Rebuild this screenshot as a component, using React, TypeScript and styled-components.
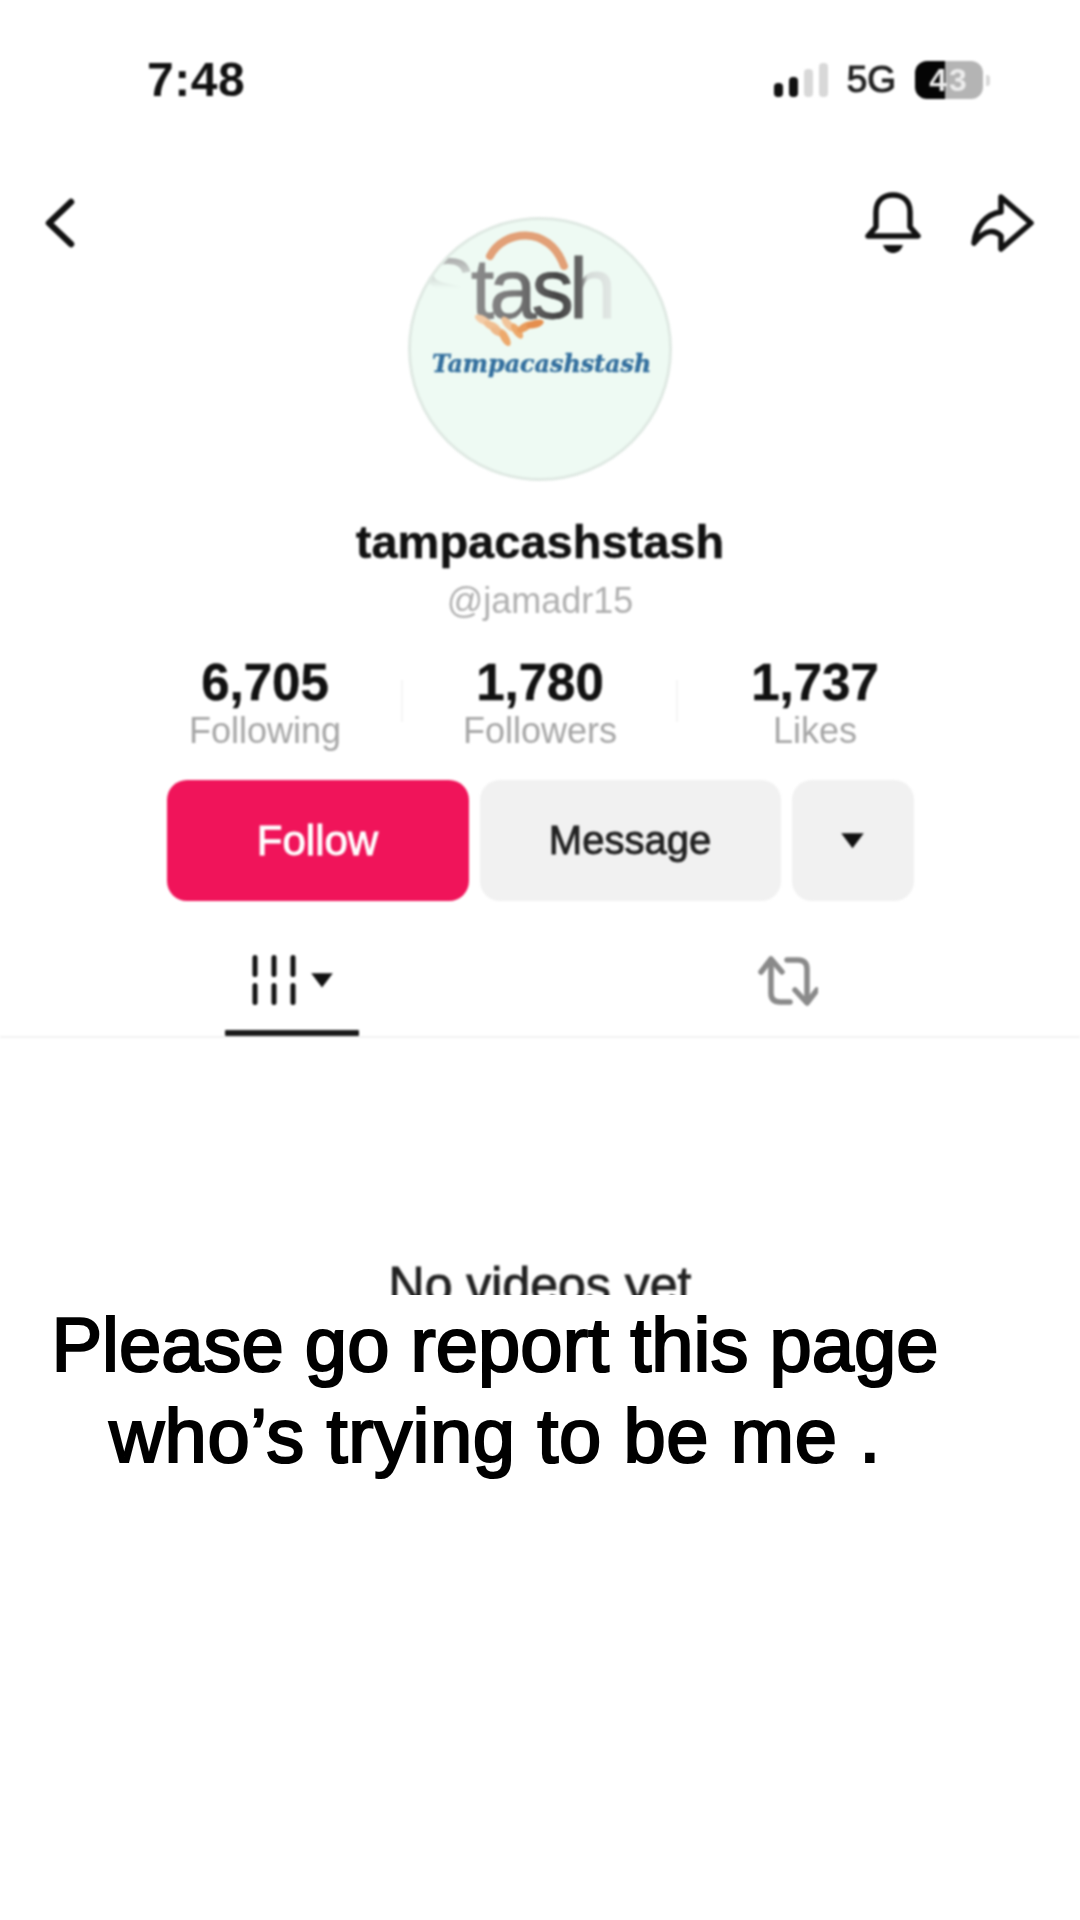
import styled, { createGlobalStyle } from 'styled-components'

const GlobalStyle = createGlobalStyle`
  html, body {
    margin: 0;
    padding: 0;
    background: #fff;
  }
`

const Page = styled.div`
  position: relative;
  width: 1080px;
  height: 1920px;
  overflow: hidden;
  background: #fff;
  color: #111;
  font-family: "Liberation Sans", Arial, sans-serif;
`

const Profile = styled.div`
  display: flex;
  flex-direction: column;
  filter: blur(0.8px);
`

const StatusBar = styled.div`
  display: flex;
  align-items: center;
  justify-content: space-between;
  height: 38px;
  margin-top: 61px;
  padding: 0 90px 0 147px;
`

const Clock = styled.div`
  font-size: 48px;
  font-weight: 700;
  line-height: 38px;
  letter-spacing: 0.5px;
  color: #111;
`

const StatusIcons = styled.div`
  display: flex;
  align-items: center;
`

const SignalBars = styled.div`
  display: flex;
  align-items: flex-end;
  gap: 6px;
  height: 34px;
  margin-right: 19px;
`

const Bar = styled.div<{ $h: number; $on?: boolean }>`
  width: 9px;
  height: ${p => p.$h}px;
  border-radius: 4px;
  background: ${p => (p.$on ? '#111' : '#d8d8d8')};
`

const Network = styled.div`
  font-size: 37px;
  line-height: 38px;
  color: #222;
  -webkit-text-stroke: 1.1px #222;
  margin-right: 19px;
`

const Battery = styled.div`
  display: flex;
  width: 68px;
  height: 38px;
  border-radius: 12px;
  overflow: hidden;
  background: linear-gradient(90deg, #050505 0 44%, #b4b4b4 44% 100%);
  align-items: center;
  justify-content: center;
  letter-spacing: 2px;
  color: #ececec;
  font-size: 32px;
  font-weight: 700;
`

const BatteryNub = styled.div`
  width: 4px;
  height: 11px;
  margin-left: 3px;
  border-radius: 0 3px 3px 0;
  background: #d8d8d8;
`

const NavBar = styled.div`
  display: flex;
  align-items: center;
  justify-content: space-between;
  height: 61px;
  margin-top: 93px;
  padding: 0 46px 0 42px;
`

const NavRight = styled.div`
  display: flex;
  align-items: center;
  gap: 49px;
`

const Avatar = styled.div`
  align-self: center;
  width: 264px;
  height: 264px;
  margin-top: -36px;
  border-radius: 50%;
  box-sizing: border-box;
  border: 3px solid #dfe9e3;
  background: #eefaf3;
  overflow: hidden;
`

const Name = styled.div`
  margin-top: 33px;
  font-size: 47px;
  font-weight: 700;
  line-height: 56px;
  text-align: center;
  color: #111;
  -webkit-text-stroke: 0.4px #111;
`

const Handle = styled.div`
  margin-top: 11px;
  font-size: 36px;
  line-height: 40px;
  text-align: center;
  color: #b0b0b0;
`

const Stats = styled.div`
  display: grid;
  grid-template-columns: 275px 275px 275px;
  justify-content: center;
  margin-top: 34px;
`

const Stat = styled.div<{ $divider?: boolean }>`
  position: relative;
  text-align: center;
  ${p =>
    p.$divider &&
    `&::after {
      content: '';
      position: absolute;
      right: 0;
      top: 25px;
      height: 42px;
      width: 2px;
      background: #f5f5f5;
    }`}
`

const StatNumber = styled.div`
  font-size: 51px;
  font-weight: 700;
  line-height: 56px;
  color: #111;
  -webkit-text-stroke: 0.4px #111;
`

const StatLabel = styled.div`
  font-size: 36px;
  line-height: 40px;
  color: #a6a6a6;
`

const Actions = styled.div`
  display: flex;
  justify-content: center;
  gap: 11px;
  margin-top: 29px;
`

const ActionButton = styled.div<{ $primary?: boolean; $w: number }>`
  display: flex;
  align-items: center;
  justify-content: center;
  width: ${p => p.$w}px;
  height: 121px;
  border-radius: 20px;
  background: ${p => (p.$primary ? '#f0145a' : '#f1f1f1')};
  color: ${p => (p.$primary ? '#fff' : '#222')};
  font-size: ${p => (p.$primary ? 42 : 40)}px;
  -webkit-text-stroke: 0.9px currentColor;
`

const Tabs = styled.div`
  display: flex;
  height: 135px;
  padding: 0 44px;
  border-bottom: 2px solid #f2f2f2;
`

const Tab = styled.div`
  flex: 1;
  display: flex;
  flex-direction: column;
  align-items: center;
  padding-top: 54px;
`

const TabIcons = styled.div`
  display: flex;
  align-items: flex-start;
  gap: 13px;
  height: 75px;
`

const TabCaret = styled.div`
  margin-top: 17px;
`

const TabUnderline = styled.div`
  width: 134px;
  height: 6px;
  border-radius: 1px;
  background: #1a1a1a;
`

const EmptyText = styled.div`
  margin-top: 218px;
  font-size: 50px;
  line-height: 58px;
  text-align: center;
  color: #222;
  -webkit-text-stroke: 0.9px #222;
`

const Caption = styled.div`
  position: absolute;
  left: 0;
  right: 0;
  top: 1295px;
  bottom: 0;
  box-sizing: border-box;
  padding: 4px 90px 0 0;
  background: #fff;
  color: #000;
  font-family: "Liberation Sans", Arial, sans-serif;
  font-size: 76px;
  line-height: 91px;
  text-align: center;
  -webkit-text-stroke: 2.2px #000;
`

const CaptionLine = styled.div<{ $spacing?: number }>`
  letter-spacing: ${p => p.$spacing ?? 0}px;
`

function Chevron() {
  return (
    <svg width="36" height="50" viewBox="0 0 36 50" fill="none">
      <path d="M29 4 L7 25 L29 46" stroke="#111" strokeWidth="6.5" strokeLinecap="round" strokeLinejoin="round" />
    </svg>
  )
}

function Bell() {
  return (
    <svg width="56" height="62" viewBox="0 0 56 62" fill="none">
      <path
        d="M3 44 L11 35 L11 20 C11 8 19 3 28 3 C37 3 45 8 45 20 L45 35 L53 44 Z"
        stroke="#111"
        strokeWidth="5.5"
        strokeLinejoin="round"
      />
      <path d="M18 53 H38 C36 59 32 61 28 61 C24 61 20 59 18 53 Z" fill="#111" />
    </svg>
  )
}

function ShareArrow() {
  return (
    <svg width="64" height="60" viewBox="0 0 64 60" fill="none">
      <path
        d="M31 4 L61 30 L31 56 L31 43 C25 37 16 35 4 50 C6 33 16 21 31 19 Z"
        stroke="#111"
        strokeWidth="5.5"
        strokeLinejoin="round"
      />
    </svg>
  )
}

function Caret({ size, color = '#111' }: { size: number; color?: string }) {
  return (
    <svg width={size} height={size * 0.7} viewBox="0 0 20 14">
      <path d="M1 1 H19 L10 13 Z" fill={color} />
    </svg>
  )
}

function VideosIcon() {
  const xs = [4, 23, 42]
  return (
    <svg width="46" height="50" viewBox="0 0 46 50">
      {xs.map(x => (
        <g key={x}>
          <rect x={x - 2.5} y="0" width="5" height="22" rx="2.5" fill="#111" />
          <rect x={x - 2.5} y="28" width="5" height="22" rx="2.5" fill="#111" />
        </g>
      ))}
    </svg>
  )
}

function RepostIcon() {
  return (
    <svg width="60" height="54" viewBox="0 0 60 54" fill="none" stroke="#8a8a8a" strokeWidth="5.5" strokeLinecap="round" strokeLinejoin="round">
      <path d="M3 17 L13 4 L24 17" />
      <path d="M13 5 V38 C13 44 16 47 22 47 H32" />
      <path d="M37 35 L49 48 L59 35" />
      <path d="M49 47 V14 C49 8 46 5 40 5 H29" />
    </svg>
  )
}

const leaves = [
  { x: 72, y: 100, r: 28, fill: '#f3cba6' },
  { x: 81, y: 106, r: 24, fill: '#f0bf92' },
  { x: 88, y: 112, r: 22, fill: '#eeb98a' },
  { x: 94, y: 118, r: 60, fill: '#eda96c' },
  { x: 97, y: 104, r: 50, fill: '#f1c49a' },
  { x: 106, y: 111, r: 55, fill: '#eda96c' },
  { x: 114, y: 107, r: -30, fill: '#e99c5c' },
  { x: 124, y: 104, r: -16, fill: '#e58e4e' },
]

function Logo() {
  return (
    <svg width="258" height="258" viewBox="0 0 258 258">
      <defs>
        <linearGradient id="stash" gradientUnits="userSpaceOnUse" x1="0" x2="210" y1="0" y2="0">
          <stop offset="0.29" stopColor="#8c8c8c" />
          <stop offset="0.5" stopColor="#777" />
          <stop offset="0.7" stopColor="#444" />
          <stop offset="0.81" stopColor="#666" />
          <stop offset="0.84" stopColor="#d5dbd8" />
          <stop offset="1" stopColor="#e6ece9" />
        </linearGradient>
        <linearGradient id="ghost" gradientUnits="userSpaceOnUse" x1="0" x2="0" y1="36" y2="68">
          <stop offset="0" stopColor="#a8a8a8" />
          <stop offset="0.5" stopColor="#c8cecb" />
          <stop offset="1" stopColor="#eefaf3" />
        </linearGradient>
      </defs>
      <path d="M79 36 C92 10 138 4 153 46" fill="none" stroke="#e2a077" strokeWidth="8" strokeLinecap="round" />
      <text
        x="8"
        y="98"
        fontFamily="'Liberation Sans', sans-serif"
        fontSize="85"
        letterSpacing="-5"
        fill="url(#stash)"
        stroke="url(#stash)"
        strokeWidth="0.8"
      >
        <tspan fill="url(#ghost)" stroke="none">S</tspan>
        tash
      </text>
      {leaves.map(l => (
        <ellipse key={l.x + '-' + l.y} cx={l.x} cy={l.y} rx="9" ry="4" fill={l.fill} transform={`rotate(${l.r} ${l.x} ${l.y})`} />
      ))}
      <text
        x="21"
        y="152"
        fontFamily="'DejaVu Serif', serif"
        fontSize="23.8"
        fontWeight="700"
        fontStyle="italic"
        fill="#336f9e"
        stroke="#336f9e"
        strokeWidth="0.4"
      >
        Tampacashstash
      </text>
    </svg>
  )
}

export default function App() {
  return (
    <Page>
      <GlobalStyle />
      <Profile>
        <StatusBar>
          <Clock>7:48</Clock>
          <StatusIcons>
            <SignalBars>
              <Bar $h={14} $on />
              <Bar $h={20} $on />
              <Bar $h={28} />
              <Bar $h={34} />
            </SignalBars>
            <Network>5G</Network>
            <Battery>43</Battery>
            <BatteryNub />
          </StatusIcons>
        </StatusBar>
        <NavBar>
          <Chevron />
          <NavRight>
            <Bell />
            <ShareArrow />
          </NavRight>
        </NavBar>
        <Avatar>
          <Logo />
        </Avatar>
        <Name>tampacashstash</Name>
        <Handle>@jamadr15</Handle>
        <Stats>
          <Stat $divider>
            <StatNumber>6,705</StatNumber>
            <StatLabel>Following</StatLabel>
          </Stat>
          <Stat $divider>
            <StatNumber>1,780</StatNumber>
            <StatLabel>Followers</StatLabel>
          </Stat>
          <Stat>
            <StatNumber>1,737</StatNumber>
            <StatLabel>Likes</StatLabel>
          </Stat>
        </Stats>
        <Actions>
          <ActionButton $primary $w={302}>Follow</ActionButton>
          <ActionButton $w={301}>Message</ActionButton>
          <ActionButton $w={122}>
            <Caret size={25} />
          </ActionButton>
        </Actions>
        <Tabs>
          <Tab>
            <TabIcons>
              <VideosIcon />
              <TabCaret>
                <Caret size={24} />
              </TabCaret>
            </TabIcons>
            <TabUnderline />
          </Tab>
          <Tab>
            <TabIcons>
              <RepostIcon />
            </TabIcons>
          </Tab>
        </Tabs>
        <EmptyText>No videos yet</EmptyText>
      </Profile>
      <Caption>
        <CaptionLine>Please go report this page</CaptionLine>
        <CaptionLine $spacing={0.55}>who’s trying to be me .</CaptionLine>
      </Caption>
    </Page>
  )
}
